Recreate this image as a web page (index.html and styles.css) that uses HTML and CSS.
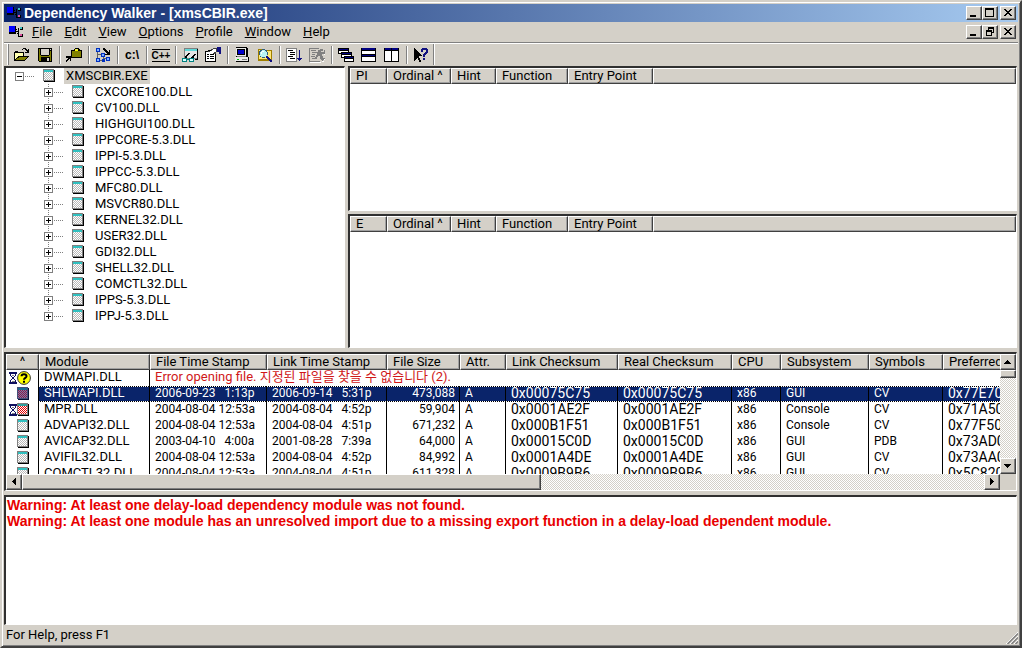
FILE: index.html
```html
<!DOCTYPE html>
<html lang="en">
<head>
<meta charset="utf-8">
<title>Dependency Walker - [xmsCBIR.exe]</title>
<link rel="stylesheet" href="styles.css">
</head>
<body>
<svg class="defs" aria-hidden="true">
  <defs>
    <g id="checks"><path d="M0 0h1v1H0zM2 0h1v1H2zM4 0h1v1H4zM6 0h1v1H6zM8 0h1v1H8zM1 1h1v1H1zM3 1h1v1H3zM5 1h1v1H5zM7 1h1v1H7zM0 2h1v1H0zM2 2h1v1H2zM4 2h1v1H4zM6 2h1v1H6zM8 2h1v1H8zM1 3h1v1H1zM3 3h1v1H3zM5 3h1v1H5zM7 3h1v1H7zM0 4h1v1H0zM2 4h1v1H2zM4 4h1v1H4zM6 4h1v1H6zM8 4h1v1H8zM1 5h1v1H1zM3 5h1v1H3zM5 5h1v1H5zM7 5h1v1H7zM0 6h1v1H0zM2 6h1v1H2zM4 6h1v1H4zM6 6h1v1H6zM8 6h1v1H8zM1 7h1v1H1zM3 7h1v1H3zM5 7h1v1H5zM7 7h1v1H7z"/></g>
    <symbol id="module" viewBox="0 0 12 14"><path d="M1 1h11v12H1z"/><path fill="#808080" d="M0 0h11v12H0z"/><path fill="#fff" d="M1 1h9v10H1z"/><path fill="#30c0c0" d="M1 1h9v2H1z"/><use href="#checks" x="1" y="3" fill="#b8b8b8"/></symbol>
    <symbol id="module-red" viewBox="0 0 12 14"><path d="M1 1h11v12H1z"/><path fill="#808080" d="M0 0h11v12H0z"/><path fill="#fff" d="M1 1h9v10H1z"/><path fill="#30a0a0" d="M1 1h9v2H1z"/><use href="#checks" x="1" y="3" fill="#e80000"/></symbol>
    <symbol id="module-sel" viewBox="0 0 12 14"><path fill="#051235" d="M1 1h11v12H1z"/><path fill="#45507a" d="M0 0h11v12H0z"/><path fill="#7880a8" d="M1 1h9v10H1z"/><path fill="#1a6a90" d="M1 1h9v2H1z"/><use href="#checks" x="1" y="3" fill="#901848"/></symbol>
    <symbol id="hourglass" viewBox="0 0 8 12"><path fill="#101060" d="M0 0h8v2H0zM0 10h8v2H0zM1 2h1v2H1zM6 2h1v2H6zM2 4h1v1H2zM5 4h1v1H5zM3 5h2v2H3zM2 7h1v1H2zM5 7h1v1H5zM1 8h1v2H1zM6 8h1v2H6z"/><path fill="#fff" d="M2 2h4v2H2zM3 4h2v1H3zM2 8h4v2H2zM3 7h2v1H3z"/><path fill="#808080" d="M3 3h2v1H3zM3 9h3v1H3z"/></symbol>
    <symbol id="question" viewBox="0 0 14 14"><circle cx="7" cy="7" r="6.4" fill="#ff0" stroke="#333"/><path fill="none" stroke="#000" stroke-width="2" d="M4.5 5.2C4.5 2.6 9.5 2.6 9.5 5.2 9.5 7 7 6.8 7 8.8M7 9.8v2"/></symbol>
    <symbol id="app" viewBox="0 0 16 16"><path d="M1 2h7v8H1z"/><path fill="#00f" d="M1 2h6v6H1z"/><path d="M8 5h1v1H8zM10 5h1v1h-1zM9 9h1v1H9zM10 11h1v1h-1zM8 7h2v1H8zM10 4h1v9h-1zM11 12h1v1h-1zM12 3h3v3h-3zM12 10h3v3h-3z"/><path fill="#40c0c0" d="M12 3h2v2h-2z"/><path fill="#e050a0" d="M12 10h2v2h-2z"/></symbol>
    <symbol id="up" viewBox="0 0 8 4"><path d="M3 0h1v1H3zM2 1h3v1H2zM1 2h5v1H1zM0 3h7v1H0z"/></symbol>
    <symbol id="down" viewBox="0 0 8 4"><path d="M0 0h7v1H0zM1 1h5v1H1zM2 2h3v1H2zM3 3h1v1H3z"/></symbol>
    <symbol id="left" viewBox="0 0 4 8"><path d="M0 3h1v1H0zM1 2h1v3H1zM2 1h1v5H2zM3 0h1v7H3z"/></symbol>
    <symbol id="right" viewBox="0 0 4 8"><path d="M0 0h1v7H0zM1 1h1v5H1zM2 2h1v3H2zM3 3h1v1H3z"/></symbol>
    <symbol id="minimize" viewBox="0 0 12 10"><path d="M2 7h6v2H2z"/></symbol>
    <symbol id="maximize" viewBox="0 0 12 10"><path fill-rule="evenodd" d="M1 0h9v9H1zM2 2v6h7V2z"/></symbol>
    <symbol id="restore" viewBox="0 0 12 10"><path fill-rule="evenodd" d="M4 0h6v6H8V5h1V2H5v1H4zM2 3h6v6H2zM3 5v3h4V5z"/></symbol>
    <symbol id="close" viewBox="0 0 12 10"><path d="M2 1h2v1H2zM8 1h2v1H8zM3 2h2v1H3zM7 2h2v1H7zM4 3h4v1H4zM5 4h2v1H5zM4 5h4v1H4zM3 6h2v1H3zM7 6h2v1H7zM2 7h2v1H2zM8 7h2v1H8z"/></symbol>
  </defs>
</svg>

<div class="window">
  <header class="titlebar">
    <svg class="icon16"><use href="#app"/></svg>
    <h1 class="title">Dependency Walker - [xmsCBIR.exe]</h1>
    <div class="caption-buttons">
      <button class="caption" aria-label="Minimize"><svg class="glyph"><use href="#minimize"/></svg></button>
      <button class="caption" aria-label="Maximize"><svg class="glyph"><use href="#maximize"/></svg></button>
      <button class="caption caption-close" aria-label="Close"><svg class="glyph"><use href="#close"/></svg></button>
    </div>
  </header>

  <nav class="menubar">
    <svg class="icon16"><use href="#app"/></svg>
    <div class="menus">
      <button class="menu"><u>F</u>ile</button>
      <button class="menu"><u>E</u>dit</button>
      <button class="menu"><u>V</u>iew</button>
      <button class="menu"><u>O</u>ptions</button>
      <button class="menu"><u>P</u>rofile</button>
      <button class="menu"><u>W</u>indow</button>
      <button class="menu"><u>H</u>elp</button>
    </div>
    <div class="caption-buttons">
      <button class="caption" aria-label="Minimize document"><svg class="glyph"><use href="#minimize"/></svg></button>
      <button class="caption" aria-label="Restore document"><svg class="glyph"><use href="#restore"/></svg></button>
      <button class="caption caption-close" aria-label="Close document"><svg class="glyph"><use href="#close"/></svg></button>
    </div>
  </nav>

  <div class="toolbar">
    <button class="tool" aria-label="Open"><svg class="icon16" viewBox="0 0 16 16"><path d="M0 5h1V4h3v1h6v4h5v1h-1v1h-1v1h-1v1h-1v1H0zM8 2h1V1h3v1h1v1h1V2h1v4h-4V5h2V4h-1V3h-1V2H9v1H8z"/><path fill="#ffffb0" d="M1 6h8v3H4v1H3v1H2v1H1z"/><path fill="#808000" d="M5 10h8v1h-1v1h-1v1H2v-1h1v-1h2z"/></svg></button>
    <button class="tool" aria-label="Save"><svg class="icon16" viewBox="0 0 16 16"><path d="M1 1h14v14H2v-1H1z"/><path fill="#808000" d="M2 2h1v6h1v1h8V8h1V4h1v10h-1v-4H4v4H2z"/><path fill="#d4d0c8" d="M4 2h8v6H4zM13 2h1v1h-1zM10 11h2v3h-2z"/></svg></button>
    <span class="sep"></span>
    <button class="tool" aria-label="Copy module path"><svg class="icon16" viewBox="0 0 16 16"><path d="M5 3h3V2h1V1h4v1h1v1h2v8H5zM0 9h5v5H4v-2H3v1H2v1H1v1H0v-2h1v-1h1v-1H0z"/><path fill="#808000" d="M6 4h9v6H6z"/><path fill="#ff0" d="M9 2h3v2H9z"/><path fill="#d4d0c8" d="M10 2h1v1h-1z"/></svg></button>
    <span class="sep"></span>
    <button class="tool" aria-label="Auto expand"><svg class="icon16" viewBox="0 0 16 16"><path fill="#606060" d="M2 3h1v11H2zM3 7h5v1H3zM3 13h5v1H3zM8 8h1v6H8zM9 11h3v1H9z"/><path fill="#0030c0" d="M1 1h4v4H1zM6 6h4v4H6zM1 11h4v4H1zM11 10h4v4h-4zM7 12h3v3H7z"/><path fill="#80b0ff" d="M2 2h2v2H2zM7 7h2v2H7zM2 12h2v2H2zM12 11h2v2h-2z"/><path d="M8 1h2v1h1v1h1v1h1v1h1V3h1v5h-5V7h2V6h-1V5h-1V4H9V3H8z"/></svg></button>
    <span class="sep"></span>
    <button class="tool tool-text" aria-label="View full paths">c:\</button>
    <span class="sep"></span>
    <button class="tool tool-text" aria-label="Undecorate C++ functions"><span class="cpp">C++</span></button>
    <span class="sep"></span>
    <button class="tool" aria-label="External viewer"><svg class="icon16" viewBox="0 0 16 16"><path fill="#808080" d="M2 1h14v11H2z"/><path fill="#e4e4e4" d="M3 4h12v7H3z"/><path fill="#60d8d8" d="M3 2h12v2H3z"/><path d="M3 9h1V8h1V7h1V6h2v1H7v1H6v1H5v2H3zM9 10h1V9h1V8h1V7h2v1h-1v1h-1v2H9zM15 2h1v11h-3v-1h2z"/><path fill="#008080" d="M0 11h5v4H0zM7 11h5v4H7zM5 12h2v1H5z"/><path fill="#d8ffff" d="M1 12h3v2H1zM8 12h3v2H8z"/></svg></button>
    <button class="tool" aria-label="Properties"><svg class="icon16" viewBox="0 0 16 16"><path d="M0 4h3V3h8v12H0z"/><path fill="#fff" d="M1 5h9v9H1z"/><path d="M2 7h2v1H2zM5 7h4v1H5zM2 9h2v1H2zM5 9h4v1H5zM2 11h2v1H2zM5 11h4v1H5z"/><path fill="#404040" d="M3 4h3V2h2V1h4v4h-1v2H8V5H3z"/><path fill="#fff" d="M5 4h2V3h1V2h3v3H9v1H8V5H5z"/><path fill="#101080" d="M12 0h4v7h-2V5h-2z"/></svg></button>
    <span class="sep"></span>
    <button class="tool" aria-label="System information"><svg class="icon16" viewBox="0 0 16 16"><path d="M2 0h11v1h1v9h1v5H2v-1H1v-4h1z"/><path fill="#e8e8e8" d="M2 1h10v8H2zM1 10h13v4H1z"/><path d="M3 2h8v6H3z"/><path fill="#00c" d="M4 3h6v4H4z"/><path fill="#808080" d="M3 9h9v1H3zM8 12h5v1H8z"/><path fill="#00c000" d="M3 12h2v1H3z"/></svg></button>
    <button class="tool" aria-label="Search order"><svg class="icon16" viewBox="0 0 16 16"><path fill="#a08000" d="M1 2h5l1 1h8v11H1z"/><path fill="#ffe878" d="M2 3h4v1h8v8H2z"/><circle cx="6.500" cy="6.500" r="4" fill="#b8f4f4" stroke="#306080"/><path fill="#101080" d="M9 9h2v1h1v1h1v1h1v1h1v2h-2v-1h-1v-1h-1v-1h-1v-1H9z"/><path fill="#fff" d="M5 4h2v1H5zM4 5h1v2H4z"/></svg></button>
    <span class="sep"></span>
    <button class="tool" aria-label="Expand all"><svg class="icon16" viewBox="0 0 16 16"><path fill="#808080" d="M0 1h11v14H0z"/><path fill="#fff" d="M1 2h9v12H1z"/><path d="M2 3h5v1H2zM4 5h5v1H4zM4 7h5v1H4zM2 9h5v1H2zM4 11h5v1H4z"/><path fill="#101080" d="M13 3h1v8h2v1h-1v1h-1v1h-1v-1h-1v-1h-1v-1h2z"/></svg></button>
    <button class="tool" aria-label="Configure module" disabled><svg class="icon16" viewBox="0 0 16 16"><path fill="#fff" d="M1 15h11v1H1zM13 14h2v1h-2zM15 12h1v1h-1zM15 3h1v5h-1z"/><path fill="#808080" d="M0 1h10v1H1v12h10v1H0zM2 3h5v1H2zM3 5h4v1H3zM3 7h3v1H3zM2 9h4v1H2zM3 11h3v1H3zM9 3h2V2h3v2h-2v1h3V3h1v4h-3v2h1v2h2v1h-1v1h-1v1h-1v-1h-1v-1h-1V9H9v1H8v2H6v-2h1V8h1V6H7V5h2z"/></svg></button>
    <span class="sep"></span>
    <button class="tool" aria-label="Cascade"><svg class="icon16" viewBox="0 0 16 16"><path d="M0 1h11v6H0zM3 5h11v6H3zM6 9h10v6H6z"/><path fill="#fff" d="M1 4h2v2H1zM1 4h9v1H1zM4 8h2v2H4zM4 8h9v1H4zM7 12h8v2H7z"/><path fill="#000080" d="M1 2h9v1H1zM4 6h9v1H4zM7 10h8v1H7z"/></svg></button>
    <button class="tool" aria-label="Tile horizontally"><svg class="icon16" viewBox="0 0 16 16"><path d="M0 1h15v14H0z"/><path fill="#fff" d="M1 4h13v3H1zM1 10h13v4H1z"/><path fill="#000080" d="M1 1h13v2H1zM1 8h13v1H1z"/></svg></button>
    <button class="tool" aria-label="Tile vertically"><svg class="icon16" viewBox="0 0 16 16"><path d="M0 1h15v14H0z"/><path fill="#fff" d="M1 4h6v10H1zM8 4h6v10H8z"/><path fill="#000080" d="M1 1h6v2H1zM8 1h6v2H8z"/></svg></button>
    <span class="sep"></span>
    <button class="tool" aria-label="Context help"><svg class="icon16" viewBox="0 0 16 16"><path d="M1 1h1v1h1v1h1v1h1v1h1v1h1v1h1v1h1v1H6v2h1v2h1v2H6v-2H5v-2H4v1H3v1H2v1H1z"/><path fill="#101080" d="M8 2h1V1h5v1h1v4h-1v1h-1v1h-1v2h-2V7h1V6h1V5h1V3h-3v2H8zM10 11h2v2h-2z"/></svg></button>
    <span class="toolbar-end"></span>
  </div>

  <main class="workspace">
    <div class="upper">
      <section class="pane tree" aria-label="Module dependency tree">
        <ul class="nodes">
          <li>
            <div class="node"><button class="expander open" aria-label="Collapse"></button><span class="dots"></span><svg class="mod"><use href="#module"/></svg><span class="name selected">XMSCBIR.EXE</span></div>
            <ul class="nodes children" id="children"></ul>
          </li>
        </ul>
      </section>
      <div class="functions">
        <section class="pane" aria-label="Parent imports">
          <table class="grid">
            <colgroup><col class="w-kind"><col class="w-ord"><col class="w-hint"><col class="w-fn"><col class="w-entry"><col></colgroup>
            <thead><tr><th>PI</th><th>Ordinal ^</th><th>Hint</th><th>Function</th><th>Entry Point</th><th></th></tr></thead>
          </table>
        </section>
        <section class="pane" aria-label="Exports">
          <table class="grid">
            <colgroup><col class="w-kind"><col class="w-ord"><col class="w-hint"><col class="w-fn"><col class="w-entry"><col></colgroup>
            <thead><tr><th>E</th><th>Ordinal ^</th><th>Hint</th><th>Function</th><th>Entry Point</th><th></th></tr></thead>
          </table>
        </section>
      </div>
    </div>

    <section class="pane modules" aria-label="Modules">
      <div class="viewport">
        <table class="grid list">
          <colgroup><col class="c-icon"><col class="c-module"><col class="c-fts"><col class="c-lts"><col class="c-size"><col class="c-attr"><col class="c-lck"><col class="c-rck"><col class="c-cpu"><col class="c-sub"><col class="c-sym"><col class="c-pref"></colgroup>
          <thead><tr><th class="sort">^</th><th>Module</th><th>File Time Stamp</th><th>Link Time Stamp</th><th>File Size</th><th>Attr.</th><th>Link Checksum</th><th>Real Checksum</th><th>CPU</th><th>Subsystem</th><th>Symbols</th><th>Preferred</th></tr></thead>
          <tbody id="rows">
            <tr><td><div class="icons"><svg class="hour"><use href="#hourglass"/></svg><svg class="quest"><use href="#question"/></svg></div></td><td>DWMAPI.DLL</td><td class="error" colspan="10">Error opening file. 지정된 파일을 찾을 수 없습니다 (2).</td></tr>
          </tbody>
        </table>
      </div>
      <div class="vscroll">
        <button class="arrow" aria-label="Scroll up"><svg class="tri-v"><use href="#up"/></svg></button>
        <div class="vthumb"></div>
        <button class="arrow arrow-last" aria-label="Scroll down"><svg class="tri-v"><use href="#down"/></svg></button>
      </div>
      <div class="hscroll">
        <button class="arrow" aria-label="Scroll left"><svg class="tri-h"><use href="#left"/></svg></button>
        <div class="htrack"><div class="hthumb"></div></div>
        <button class="arrow" aria-label="Scroll right"><svg class="tri-h"><use href="#right"/></svg></button>
      </div>
    </section>

    <section class="pane log" aria-label="Log">
      <p>Warning: At least one delay-load dependency module was not found.</p>
      <p>Warning: At least one module has an unresolved import due to a missing export function in a delay-load dependent module.</p>
    </section>
  </main>

  <footer class="status">
    <span>For Help, press F1</span>
    <svg class="grip" viewBox="0 0 12 12"><path fill="none" stroke="#fff" d="M0 12L12 0M4 12L12 4M8 12L12 8"/><path fill="none" stroke="#808080" stroke-width="1.500" d="M1.500 12L12 1.500M5.500 12L12 5.500M9.500 12L12 9.500"/></svg>
  </footer>
</div>
<script src="app.js"></script>
</body>
</html>
```
FILE: styles.css
```css
* { box-sizing: border-box; }

body {
  margin: 0;
  font: 13px/16px Roboto, "Noto Sans CJK KR", sans-serif;
  color: #000;
  background: #d4d0c8;
}

svg { display: block; flex: none; shape-rendering: crispEdges; }
.defs { position: absolute; width: 0; height: 0; }
button { margin: 0; padding: 0; border: 0; background: none; font: inherit; color: inherit; }
ul { margin: 0; padding: 0; list-style: none; }

.window {
  display: flex;
  flex-direction: column;
  height: 100vh;
  padding: 2px;
  border: 2px solid;
  border-color: #d4d0c8 #404040 #404040 #d4d0c8;
  box-shadow: inset 1px 1px #fff, inset -1px -1px #808080;
  background: #d4d0c8;
}

/* Title and menu */
.titlebar, .menubar { display: flex; align-items: center; flex: none; padding: 0 2px; }
.titlebar { height: 18px; background: linear-gradient(90deg, #0a246a, #a6caf0); }
.menubar { height: 20px; padding-left: 4px; }
.icon16 { width: 16px; height: 16px; }
.title { flex: 1; margin: 0 2px; font: bold 14px/18px "Liberation Sans", sans-serif; color: #fff; white-space: nowrap; }
.menus { display: flex; flex: 1; padding-left: 2px; }
.menu { padding: 0 6px; }
.caption-buttons { display: flex; }
.caption {
  display: grid;
  place-items: center;
  width: 16px;
  height: 14px;
}
.caption, .arrow, .vthumb, .hthumb {
  background: #d4d0c8;
  border: 1px solid;
  border-color: #fff #404040 #404040 #fff;
  box-shadow: inset -1px -1px #808080;
}
.caption-close { margin-left: 2px; }
.glyph { width: 12px; height: 10px; }

/* Toolbar */
.toolbar {
  display: flex;
  align-items: center;
  flex: none;
  height: 24px;
  padding-left: 3px;
  border-top: 1px solid #808080;
  box-shadow: inset 0 1px #fff;
}
.toolbar::before { content: ""; width: 3px; height: 21px; border-left: 1px solid #fff; box-shadow: inset 1px 0 #808080; }
.tool { display: grid; place-items: center; width: 23px; height: 21px; padding-right: 1px; padding-top: 1px; }
.tool-text { font: bold 12px/14px "Liberation Sans", sans-serif; }
.cpp { font-size: 10px; line-height: 11px; border-top: 1px solid #000; border-bottom: 1px solid #000; }
.sep { width: 2px; height: 18px; margin: 0 2px; border-left: 1px solid #808080; border-right: 1px solid #fff; }
.toolbar-end { width: 2px; height: 21px; border-left: 1px solid #808080; border-right: 1px solid #fff; }

/* Panes */
.workspace { display: grid; flex: 1; min-height: 0; gap: 4px; padding-right: 1px; grid-template-rows: 282fr 139fr 130fr; }
.upper { display: grid; min-height: 0; gap: 3px; grid-template-columns: 341fr 669fr; }
.functions { display: grid; min-height: 0; gap: 3px; grid-template-rows: 145fr 134fr; }
.pane {
  min-width: 0;
  min-height: 0;
  overflow: hidden;
  background: #fff;
  border: solid;
  border-width: 2px 1px 1px 2px;
  border-color: #303030 #fff #fff #303030;
}

/* Tree */
.node { display: grid; grid-template-columns: 9px 10px 9px 12px 9px auto; justify-content: start; align-items: center; height: 16px; padding-left: 9px; }
.children {
  padding-left: 29px;
  background: repeating-linear-gradient(#808080 0 1px, transparent 1px 2px) no-repeat 42px 0 / 1px calc(100% - 8px);
}
.expander {
  width: 9px;
  height: 9px;
  border: 1px solid #808080;
  background:
    linear-gradient(#000, #000) center / 5px 1px no-repeat,
    linear-gradient(#000, #000) center / 1px 5px no-repeat,
    #fff;
}
.expander.open { background: linear-gradient(#000, #000) center / 5px 1px no-repeat, #fff; }
.dots { height: 1px; background: repeating-linear-gradient(90deg, transparent 0 1px, #808080 1px 2px); }
.mod { grid-column: 4; width: 12px; height: 14px; }
.name { grid-column: 6; padding: 0 2px; }
.selected { background: #d4d0c8; }

/* Tables */
.grid { width: 100%; table-layout: fixed; border-collapse: separate; border-spacing: 0; }
.grid th {
  height: 16px;
  padding: 0 0 0 5px;
  font-weight: normal;
  line-height: 14px;
  text-align: left;
  white-space: nowrap;
  background: #d4d0c8;
  border: 1px solid;
  border-color: #fff #404040 #404040 #fff;
  box-shadow: inset -1px -1px #a0a0a0;
}
.w-kind { width: 37px; }
.w-ord { width: 64px; }
.w-hint { width: 45px; }
.w-fn { width: 72px; }
.w-entry { width: 85px; }

.modules { display: grid; grid-template: minmax(0, 1fr) 16px / minmax(0, 1fr) 16px; background: #d4d0c8; }
.viewport { overflow: hidden; background: #fff; }
.list { width: 1060px; }
.grid th.sort { padding: 0; text-align: center; }
.c-icon { width: 33px; }
.c-module { width: 111px; }
.c-fts { width: 117px; }
.c-lts { width: 120px; }
.c-size { width: 73px; }
.c-attr { width: 46px; }
.c-lck { width: 112px; }
.c-rck { width: 114px; }
.c-cpu { width: 49px; }
.c-sub { width: 88px; }
.c-sym { width: 74px; }
.list td {
  height: 16px;
  padding: 0 4px 2px 5px;
  font-size: 12px;
  line-height: 14px;
  white-space: pre;
  border-right: 1px solid #000;
}
.list td:first-child { padding: 0 0 0 2px; }
.list td:nth-child(2) { font-size: 13px; }
.list td.hex { font-size: 14px; }
.list td.size { text-align: right; }
.list td.error { font-size: 13px; color: #d01818; }
.current td:not(:first-child) {
  color: #fff;
  background:
    repeating-linear-gradient(90deg, #fff 0 1px, #000 1px 2px) top / 100% 1px no-repeat,
    repeating-linear-gradient(90deg, #fff 0 1px, #000 1px 2px) bottom / 100% 1px no-repeat,
    #0a246a;
}
.icons { display: flex; align-items: center; height: 16px; padding-left: 9px; }
.icons:has(.hour) { padding-left: 1px; }
.hour { width: 8px; height: 12px; }
.quest { width: 14px; height: 14px; shape-rendering: auto; }

/* Scroll bars */
.vscroll, .htrack { background: repeating-conic-gradient(#fff 0 25%, #d4d0c8 0 50%) 0 0 / 2px 2px; }
.vscroll { display: flex; flex-direction: column; }
.hscroll { display: flex; }
.arrow { display: grid; place-items: center; flex: none; width: 16px; height: 16px; }
.arrow-last { margin-top: auto; }
.tri-v { width: 8px; height: 4px; }
.tri-h { width: 4px; height: 8px; }
.vthumb { height: 8px; }
.htrack { flex: 1; }
.hthumb { width: 54%; height: 16px; }

/* Log and status */
.log { padding-left: 1px; font: bold 14px/16px "Liberation Sans", sans-serif; color: #e80000; }
.log p { margin: 0; }
.status { display: flex; align-items: flex-end; justify-content: space-between; flex: none; height: 19px; padding-left: 2px; line-height: 18px; }
.grip { width: 12px; height: 12px; shape-rendering: auto; }
```
FILE: app.js
```js
const children = ["CXCORE100", "CV100", "HIGHGUI100", "IPPCORE-5.3", "IPPI-5.3", "IPPCC-5.3", "MFC80", "MSVCR80",
  "KERNEL32", "USER32", "GDI32", "SHELL32", "COMCTL32", "IPPS-5.3", "IPPJ-5.3"];

document.getElementById("children").innerHTML = children.map(name =>
  `<li><div class="node"><button class="expander" aria-label="Expand"></button><span class="dots"></span><svg class="mod"><use href="#module"/></svg><span class="name">${name}.DLL</span></div></li>`
).join("");

const modules = [
  ["sel", "SHLWAPI.DLL", "2006-09-23   1:13p", "2006-09-14   5:31p", "473,088", "0x00075C75", "GUI", "CV", "0x77E70"],
  ["red", "MPR.DLL", "2004-08-04 12:53a", "2004-08-04   4:52p", "59,904", "0x0001AE2F", "Console", "CV", "0x71A50"],
  ["", "ADVAPI32.DLL", "2004-08-04 12:53a", "2004-08-04   4:51p", "671,232", "0x000B1F51", "Console", "CV", "0x77F50"],
  ["", "AVICAP32.DLL", "2003-04-10   4:00a", "2001-08-28   7:39a", "64,000", "0x00015C0D", "GUI", "PDB", "0x73AD0"],
  ["", "AVIFIL32.DLL", "2004-08-04 12:53a", "2004-08-04   4:52p", "84,992", "0x0001A4DE", "GUI", "CV", "0x73AA0"],
  ["", "COMCTL32.DLL", "2004-08-04 12:53a", "2004-08-04   4:51p", "611,328", "0x0009B9B6", "GUI", "CV", "0x5C820"]
];

document.getElementById("rows").insertAdjacentHTML("beforeend", modules.map(([kind, name, file, link, size, sum, sub, sym, base]) => {
  const hour = kind === "red" ? '<svg class="hour"><use href="#hourglass"/></svg>' : "";
  const icon = kind ? `module-${kind}` : "module";
  return `<tr class="${kind === "sel" ? "current" : ""}"><td><div class="icons">${hour}<svg class="mod"><use href="#${icon}"/></svg></div></td>` +
    `<td>${name}</td><td>${file}</td><td>${link}</td><td class="size">${size}</td><td>A</td>` +
    `<td class="hex">${sum}</td><td class="hex">${sum}</td><td>x86</td><td>${sub}</td><td>${sym}</td><td class="hex">${base}</td></tr>`;
}).join(""));
```
